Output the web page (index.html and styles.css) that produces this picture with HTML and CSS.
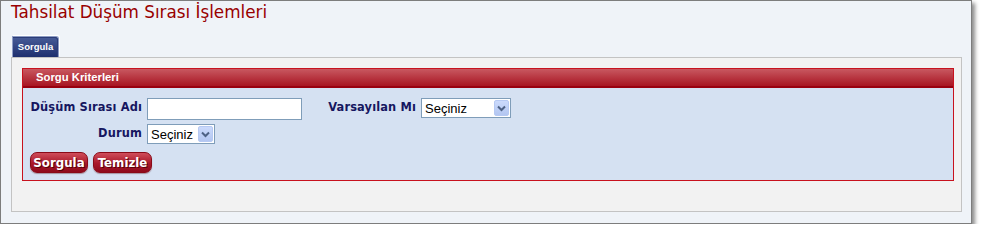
FILE: index.html
```html
<!DOCTYPE html>
<html lang="tr">
<head>
<meta charset="utf-8">
<title>Tahsilat Düşüm Sırası İşlemleri</title>
<link rel="stylesheet" href="styles.css">
</head>
<body>
<div class="window">
  <div class="title">Tahsilat Düşüm Sırası İşlemleri</div>
  <div class="tabs"><span class="tab">Sorgula</span></div>
  <div class="panel">
    <div class="criteria">
      <div class="criteria-head">Sorgu Kriterleri</div>
      <div class="criteria-body">
        <div class="form">
          <label class="lbl">Düşüm Sırası Adı</label>
          <input class="txt" type="text">
          <label class="lbl">Varsayılan Mı</label>
          <div class="select sel-wide">
            <select><option>Seçiniz</option></select>
            <span class="arrow"><svg width="15" height="16" viewBox="0 0 15 16"><path d="M4 6.5 L7.5 10 L11 6.5" fill="none" stroke="#4d6185" stroke-width="2"/></svg></span>
          </div>
          <label class="lbl">Durum</label>
          <div class="select sel-small">
            <select><option>Seçiniz</option></select>
            <span class="arrow"><svg width="15" height="16" viewBox="0 0 15 16"><path d="M4 6.5 L7.5 10 L11 6.5" fill="none" stroke="#4d6185" stroke-width="2"/></svg></span>
          </div>
        </div>
        <div class="buttons">
          <button class="btn">Sorgula</button>
          <button class="btn">Temizle</button>
        </div>
      </div>
    </div>
  </div>
</div>
</body>
</html>
```
FILE: styles.css
```css
html, body { margin: 0; padding: 0; background: #ffffff; }
body { font-family: "DejaVu Sans", Verdana, sans-serif; }

.window {
  box-sizing: border-box;
  width: 972px;
  height: 224px;
  border: 1px solid #7d7d7d;
  background: #eff3f8;
  box-shadow: 3px 3px 4px rgba(0,0,0,0.45);
}

.title {
  height: 22px;
  line-height: 22px;
  padding-left: 10px;
  font-size: 16.8px;
  color: #990000;
  margin-bottom: 13px;
}

.tabs { height: 21px; padding-left: 11px; display: flex; }
.tab {
  box-sizing: border-box;
  width: 47px;
  height: 21px;
  padding-top: 4px;
  text-align: center;
  font-family: "Liberation Sans", Arial, sans-serif;
  font-weight: bold;
  font-size: 9.5px;
  color: #ffffff;
  background: linear-gradient(#475c98, #1e2f6e);
  border: 1px solid #8d9cc4;
  border-bottom: none;
  border-top-right-radius: 3px;
  box-shadow: inset -1px 1px 0 #2b3c78, 1px -1px 0 #ffffff;
}

.panel {
  box-sizing: border-box;
  margin-left: 10px;
  width: 951px;
  height: 155px;
  border: 1px solid #c3c3c3;
  background: #f2f2f2;
  padding: 10px 0 0 10px;
}

.criteria {
  box-sizing: border-box;
  width: 932px;
  border: 1px solid #c8121e;
  background: #d5e1f2;
}

.criteria-head {
  box-sizing: border-box;
  height: 19px;
  padding-left: 13px;
  line-height: 17px;
  font-family: "Liberation Sans", Arial, sans-serif;
  font-weight: bold;
  font-size: 11.3px;
  color: #ffffff;
  background: linear-gradient(#c85860, #a81522);
  border-bottom: 2px solid #990010;
}

.criteria-body { padding: 10px 0 7px 7px; }

.form {
  display: grid;
  grid-template-columns: 112px 155px 109px 90px;
  column-gap: 5px;
  row-gap: 4px;
  align-items: start;
}

.lbl {
  text-align: right;
  font-weight: bold;
  font-size: 11.4px;
  letter-spacing: 0.15px;
  color: #161660;
  padding-top: 2px;
  white-space: nowrap;
}

.txt {
  box-sizing: border-box;
  width: 155px;
  height: 22px;
  margin: 0;
  border: 1px solid #7f9db9;
  background: #ffffff;
}

.select {
  box-sizing: border-box;
  height: 20px;
  display: flex;
  align-items: center;
  border: 1px solid #7f9db9;
  background: #ffffff;
  padding-right: 1px;
}
.sel-wide { width: 90px; }
.sel-small { width: 68px; }
.select select {
  flex: 1;
  min-width: 0;
  -webkit-appearance: none;
  appearance: none;
  border: none;
  background: transparent;
  outline: none;
  padding: 0 0 0 3px;
  margin: 0;
  font-family: "Liberation Sans", Arial, sans-serif;
  font-size: 13px;
  color: #000000;
  height: 18px;
}
.arrow {
  box-sizing: border-box;
  width: 15px;
  height: 16px;
  display: flex;
  background: linear-gradient(#cbdafc, #b3c6f1);
  border: 1px solid #b6c9f3;
  border-radius: 2px;
}
.arrow svg { display: block; margin: -1px; }

.buttons { display: flex; gap: 5px; margin-top: 8px; }
.btn {
  box-sizing: border-box;
  height: 21px;
  padding: 0;
  margin: 0;
  font-family: "DejaVu Sans", Verdana, sans-serif;
  font-weight: bold;
  font-size: 11.8px;
  color: #ffffff;
  text-shadow: 1px 1px 0 #5a0008;
  background: linear-gradient(#cf4d5a, #a9182a 55%, #8f0a1c);
  border: 1px solid #8a0a18;
  border-radius: 7px;
  box-shadow: 0 1px 1px rgba(80,0,10,0.35);
}
.btn:first-child { width: 58px; }
.btn:last-child { width: 59px; }
```
